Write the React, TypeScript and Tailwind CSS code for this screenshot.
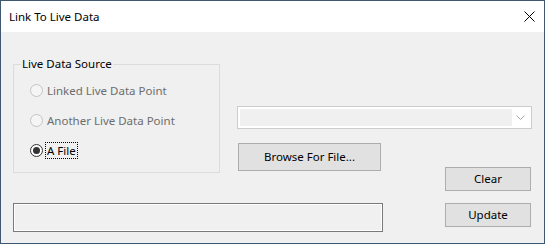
import React from "react";

const font = { fontFamily: '"Noto Sans", "Open Sans", sans-serif' };

function Radio({ label, checked, disabled, focused }: { label: string; checked?: boolean; disabled?: boolean; focused?: boolean }) {
  return (
    <div className="flex h-[20px] items-center">
      <span
        className={
          "flex h-[13px] w-[13px] items-center justify-center rounded-full border " +
          (disabled ? "border-[#c4c4c4] bg-[#f5f5f5]" : "border-[#333333] bg-white")
        }
      >
        {checked && <span className="h-[7px] w-[7px] rounded-full bg-[#333333]" />}
      </span>
      <span
        className={
          "ml-[2px] px-[1px] leading-[15px] border border-dotted " +
          (focused ? "border-black" : "border-transparent") +
          (disabled ? " text-[#6d6d6d]" : " text-black")
        }
      >
        {label}
      </span>
    </div>
  );
}

export default function App() {
  return (
    <div className="flex h-[244px] w-[545px] flex-col border border-[#3f5872] text-[11.5px] text-black" style={font}>
      <div className="flex h-[31px] items-center justify-between bg-white pl-[8px] pr-[9px]">
        <span>Link To Live Data</span>
        <svg width="11" height="11" viewBox="0 0 11 11" className="mr-[0px]">
          <path d="M0.5 0.5 L10.5 10.5 M10.5 0.5 L0.5 10.5" stroke="#000" strokeWidth="1" />
        </svg>
      </div>
      <div className="flex flex-1 flex-col bg-[#f0f0f0] px-[12px] pt-[32px]">
        <div className="flex gap-[17px]">
          <div className="relative h-[109px] w-[207px] border border-[#dcdcdc]">
            <span className="absolute left-[7px] top-[-9px] bg-[#f0f0f0] px-[1px] leading-[16px]">Live Data Source</span>
            <div className="flex flex-col gap-[10px] pl-[16px] pt-[15px]">
              <Radio label="Linked Live Data Point" disabled />
              <Radio label="Another Live Data Point" disabled />
              <Radio label="A File" checked focused />
            </div>
          </div>
          <div className="flex w-[295px] flex-col">
            <div className="mt-[42px] flex h-[23px] items-stretch border border-[#cccccc] bg-white p-[2px]">
              <div className="flex-1 bg-[#f0f0f0]" />
              <div className="flex w-[17px] items-center justify-center">
                <svg width="9" height="5" viewBox="0 0 9 5">
                  <path d="M0.5 0.5 L4.5 4.5 L8.5 0.5" stroke="#a8a8a8" strokeWidth="1" fill="none" />
                </svg>
              </div>
            </div>
            <div className="mt-[14px] flex items-start justify-between">
              <button className="ml-[1px] h-[28px] w-[143px] border border-[#adadad] bg-[#e1e1e1] text-black">
                Browse For File...
              </button>
              <button className="mr-[1px] mt-[24px] h-[24px] w-[86px] border border-[#adadad] bg-[#e1e1e1] text-black">
                Clear
              </button>
            </div>
          </div>
        </div>
        <div className="mt-[12px] flex items-start justify-between">
          <div className="h-[29px] w-[370px] border border-[#7a7a7a] bg-[#f0f0f0] shadow-[inset_0_0_0_1px_#ffffff]" />
          <button className="mr-[1px] h-[24px] w-[86px] border border-[#adadad] bg-[#e1e1e1] text-black">Update</button>
        </div>
      </div>
    </div>
  );
}
